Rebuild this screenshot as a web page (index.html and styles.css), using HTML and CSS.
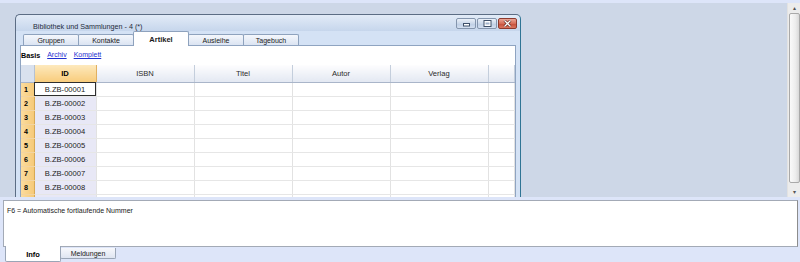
FILE: index.html
```html
<!DOCTYPE html>
<html lang="de">
<head>
    <meta charset="UTF-8">
    <title>Bibliothek und Sammlungen</title>
    <link rel="stylesheet" href="styles.css">
</head>
<body>
<div class="app">
    <div class="workspace">
        <div class="mdi">
            <div class="window">
                <div class="window__title">
                    <span class="window__caption">Bibliothek und Sammlungen - 4 (*)</span>
                    <div class="window__buttons">
                        <button type="button" class="wbtn" aria-label="minimieren">
                            <svg width="9" height="7" viewBox="0 0 9 7"><rect x="1.5" y="3.5" width="6" height="2.5" fill="#fff" stroke="#3e5069"/></svg>
                        </button>
                        <button type="button" class="wbtn" aria-label="maximieren">
                            <svg width="9" height="7" viewBox="0 0 9 7"><rect x="1" y="0.5" width="7" height="6" fill="#fff" stroke="#3e5069"/><rect x="2.5" y="2.5" width="4" height="2" fill="#9fb2cb"/></svg>
                        </button>
                        <button type="button" class="wbtn wbtn--close" aria-label="schliessen">
                            <svg width="9" height="7" viewBox="0 0 9 7"><path d="M1.5 0.5 L7.5 6.5 M7.5 0.5 L1.5 6.5" stroke="#5b2118" stroke-width="2.6"/><path d="M1.5 0.5 L7.5 6.5 M7.5 0.5 L1.5 6.5" stroke="#fff" stroke-width="1.3"/></svg>
                        </button>
                    </div>
                </div>
                <div class="window__body">
                    <div class="tabs">
                        <span class="tab">Gruppen</span>
                        <span class="tab">Kontakte</span>
                        <span class="tab tab--active">Artikel</span>
                        <span class="tab">Ausleihe</span>
                        <span class="tab">Tagebuch</span>
                    </div>
                    <div class="page">
                        <div class="views">
                            <b>Basis</b>
                            <a href="#">Archiv</a>
                            <a href="#">Komplett</a>
                        </div>
                        <table class="grid">
                            <colgroup>
                                <col class="col-num">
                                <col class="col-id">
                                <col class="col-wide">
                                <col class="col-wide">
                                <col class="col-wide">
                                <col class="col-wide">
                                <col>
                            </colgroup>
                            <thead>
                                <tr>
                                    <th class="corner"></th>
                                    <th class="th-id">ID</th>
                                    <th>ISBN</th>
                                    <th>Titel</th>
                                    <th>Autor</th>
                                    <th>Verlag</th>
                                    <th></th>
                                </tr>
                            </thead>
                            <tbody>
                                <tr><td class="num">1</td><td class="id id--selected">B.ZB-00001</td><td></td><td></td><td></td><td></td><td></td></tr>
                                <tr><td class="num">2</td><td class="id">B.ZB-00002</td><td></td><td></td><td></td><td></td><td></td></tr>
                                <tr><td class="num">3</td><td class="id">B.ZB-00003</td><td></td><td></td><td></td><td></td><td></td></tr>
                                <tr><td class="num">4</td><td class="id">B.ZB-00004</td><td></td><td></td><td></td><td></td><td></td></tr>
                                <tr><td class="num">5</td><td class="id">B.ZB-00005</td><td></td><td></td><td></td><td></td><td></td></tr>
                                <tr><td class="num">6</td><td class="id">B.ZB-00006</td><td></td><td></td><td></td><td></td><td></td></tr>
                                <tr><td class="num">7</td><td class="id">B.ZB-00007</td><td></td><td></td><td></td><td></td><td></td></tr>
                                <tr><td class="num">8</td><td class="id">B.ZB-00008</td><td></td><td></td><td></td><td></td><td></td></tr>
                                <tr class="row-empty"><td class="num"></td><td class="id"></td><td></td><td></td><td></td><td></td><td></td></tr>
                            </tbody>
                        </table>
                    </div>
                </div>
            </div>
        </div>
        <div class="vscroll">
            <span class="vscroll__arrow">&#9652;</span>
            <span class="vscroll__thumb"></span>
            <span class="vscroll__arrow">&#9662;</span>
        </div>
    </div>

    <div class="bottom">
        <div class="info-box">F6 = Automatische fortlaufende Nummer</div>
        <div class="bottom-tabs">
            <span class="btab btab--active">Info</span>
            <span class="btab">Meldungen</span>
        </div>
    </div>
</div>
</body>
</html>
```

FILE: styles.css
```css
*,
*::before,
*::after {
    box-sizing: border-box;
}

body {
    margin: 0;
    width: 800px;
    height: 262px;
    overflow: hidden;
    font-family: "Liberation Sans", Arial, sans-serif;
    font-size: 7px;
    color: #000;
    background-color: #dde5f9;
}

button {
    font: inherit;
    color: inherit;
}

.app {
    display: flex;
    flex-direction: column;
    height: 262px;
    padding-top: 3px;
    background-color: #dde5f9;
}

.workspace {
    display: flex;
    height: 194px;
}

.mdi {
    flex: 1;
    overflow: hidden;
    background-color: #cdd7e7;
    padding: 11px 0 0 15px;
}

/* child window */
.window {
    width: 506px;
    height: 240px;
    display: flex;
    flex-direction: column;
    border: 1px solid #5c6d84;
    border-right-color: #2f7494;
    border-radius: 5px 5px 0 0;
    background: linear-gradient(#e2ebf7, #c6d6ec 16px, #d4e2f5 16px);
}

.window__title {
    height: 16px;
    display: flex;
    justify-content: space-between;
    align-items: flex-start;
    padding: 0 3px 0 17px;
}

.window__caption {
    font-size: 7.2px;
    color: #1e2a3a;
    margin-top: 7px;
}

.window__buttons {
    display: flex;
    gap: 1px;
    margin-top: 3px;
}

.wbtn {
    width: 20px;
    height: 11px;
    padding: 0;
    display: flex;
    align-items: center;
    justify-content: center;
    border: 1px solid #8495ad;
    border-radius: 2px;
    background: linear-gradient(#eaf0f8, #cbd8ea 50%, #bccde4 50%, #d3dff0);
}

.wbtn--close {
    width: 19px;
    border-color: #8c3a2e;
    background: linear-gradient(#eba596, #d66d58 50%, #c54c36 50%, #d97560);
}

.window__body {
    flex: 1;
    display: flex;
    flex-direction: column;
    padding: 0 4px;
}

.tabs {
    height: 14px;
    display: flex;
    align-items: flex-end;
    padding-left: 3px;
    position: relative;
    z-index: 1;
}

.tab {
    width: 56px;
    height: 11px;
    display: flex;
    justify-content: center;
    align-items: center;
    border: 1px solid #8ea2bd;
    border-bottom: none;
    border-radius: 2px 2px 0 0;
    margin-right: -1px;
    background: linear-gradient(#f4f7fc, #dbe4f2);
    color: #1a1a1a;
}

.tab--active {
    height: 15px;
    margin-bottom: -1px;
    background: #fff;
    font-weight: bold;
    font-size: 7.5px;
}

.page {
    flex: 1;
    background-color: #fff;
    border: 1px solid #8fa4c1;
    border-bottom: none;
}

.views {
    height: 19px;
    display: flex;
    gap: 7px;
    padding-top: 5px;
}

.views b {
    font-size: 7.2px;
}

.views a {
    color: #1f2fd0;
    text-decoration: underline;
}

/* grid */
.grid {
    width: 494px;
    border-collapse: collapse;
    table-layout: fixed;
    font-size: 7.6px;
}

.col-num {
    width: 13px;
}

.col-id {
    width: 62px;
}

.col-wide {
    width: 98px;
}

.grid th {
    height: 17px;
    padding: 0;
    font-weight: normal;
    color: #2b2b2b;
    background: linear-gradient(#fdfdfe, #e3e8f2);
    border-right: 1px solid #c4cedc;
    border-bottom: 1px solid #a9b5c9;
}

.grid th.corner {
    background: #d9e1ee;
    border-right-color: #b5c1d3;
}

.grid th.th-id {
    font-weight: bold;
    color: #000;
    background: linear-gradient(#fde9bd, #f8cc7c);
    border-right-color: #e1b061;
}

.grid td {
    height: 14px;
    padding: 0;
    border-right: 1px solid #e2e2e2;
    border-bottom: 1px solid #e6e6e6;
}

.grid td.num {
    padding-left: 3px;
    font-weight: bold;
    font-size: 7.2px;
    background: linear-gradient(90deg, #fbdc9e, #f6c978);
    border-right: 1px solid #d7a955;
    border-bottom-color: #f3d4a0;
}

.grid td.id {
    text-align: center;
    color: #222;
    background-color: #e8e8f6;
}

.grid td.id--selected {
    background-color: #fff;
    outline: 1px solid #2e2e2e;
    outline-offset: -1px;
}

/* vertical scrollbar */
.vscroll {
    width: 13px;
    display: flex;
    flex-direction: column;
    align-items: center;
    background-color: #ececec;
    border-left: 1px solid #e2e2e2;
}

.vscroll__arrow {
    height: 10px;
    font-size: 6px;
    line-height: 10px;
    color: #555;
}

.vscroll__thumb {
    flex: 1;
    width: 11px;
    margin-bottom: 4px;
    border: 1px solid #a9a9a9;
    border-radius: 2px;
    background: linear-gradient(90deg, #fafafa, #ededed 60%, #d9d9d9);
}

/* bottom panel */
.bottom {
    flex: 1;
    padding: 3px 2px 0 3px;
}

.info-box {
    height: 47px;
    padding: 6px 3px;
    background-color: #fff;
    border: 1px solid #a3aab6;
    border-right-color: #8c8c8c;
    color: #1a1a1a;
}

.bottom-tabs {
    display: flex;
    padding-left: 2px;
}

.btab {
    width: 56px;
    height: 11px;
    display: flex;
    justify-content: center;
    align-items: center;
    margin-top: 1px;
    border: 1px solid #9aa5b6;
    border-top: none;
    border-radius: 0 0 2px 2px;
    background: linear-gradient(#f7f8fc, #dfe5f1);
    color: #222;
}

.btab--active {
    height: 16px;
    margin-top: -1px;
    margin-right: -1px;
    padding-top: 1px;
    background: #fff;
    font-weight: bold;
    font-size: 7.5px;
    color: #000;
}
```
